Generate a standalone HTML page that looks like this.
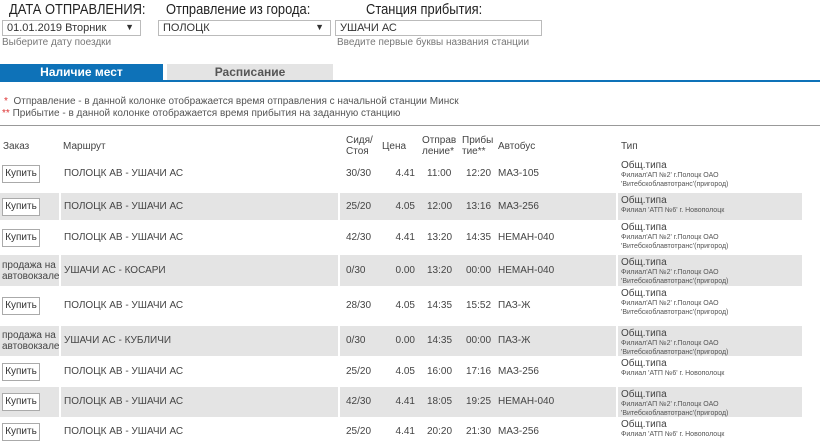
<!DOCTYPE html>
<html><head><meta charset="utf-8">
<style>
*{margin:0;padding:0;box-sizing:border-box}
body{width:820px;height:446px;overflow:hidden;background:#fff;font-family:"Liberation Sans",Arial,sans-serif;color:#333;position:relative;font-size:10px}
.a{position:absolute;white-space:nowrap}
.h{font-size:15px;color:#222;top:1px;transform:scaleX(0.86);transform-origin:0 0}
.sel{position:absolute;top:20px;height:16px;border:1px solid #bbb;font-size:11px;padding:1px 4px;color:#333;background:#fff}
.sel span{position:absolute;right:6px;top:1px;font-size:9px}
.hint{font-size:10px;color:#777;top:37px}
.tab{position:absolute;top:64px;height:17px;font-weight:bold;font-size:12px;text-align:center;line-height:17px}
.row{position:absolute;left:0;width:802px}
.g{background:#e4e4e4}
.c{position:absolute;font-size:10px;color:#444;white-space:nowrap}
.btn{position:absolute;left:2px;width:38px;height:18px;border:1px solid #aaa;background:#fff;font-size:10px;text-align:center;line-height:16px;color:#333}
.vl{position:absolute;top:0;bottom:0;width:2px;background:#fff}
.t1{font-size:10px;color:#444}
.t2{font-size:7px;color:#555;line-height:9px}
</style></head><body>
<div class="a h" style="left:9px">ДАТА ОТПРАВЛЕНИЯ:</div>
<div class="a h" style="left:166px">Отправление из города:</div>
<div class="a h" style="left:366px">Станция прибытия:</div>
<div class="sel" style="left:2px;width:139px">01.01.2019 Вторник<span>▼</span></div>
<div class="sel" style="left:158px;width:173px">ПОЛОЦК<span>▼</span></div>
<div class="sel" style="left:335px;width:207px">УШАЧИ АС</div>
<div class="a hint" style="left:2px">Выберите дату поездки</div>
<div class="a hint" style="left:337px">Введите первые буквы названия станции</div>
<div class="tab" style="left:0;width:163px;background:#0e72b8;color:#fff">Наличие мест</div>
<div class="tab" style="left:167px;width:166px;background:#e4e4e4;color:#555;height:16px">Расписание</div>
<div class="a" style="left:0;top:80px;width:820px;height:2px;background:#0e72b8"></div>
<div class="a" style="left:4px;top:96px;font-size:10px;color:#555"><span style="color:#d33">*</span>&nbsp;&nbsp;Отправление - в данной колонке отображается время отправления с начальной станции Минск</div>
<div class="a" style="left:2px;top:108px;font-size:10px;color:#555"><span style="color:#d33">**</span> Прибытие - в данной колонке отображается время прибытия на заданную станцию</div>
<div class="a" style="left:0;top:125px;width:820px;height:1px;background:#999"></div>
<div class="c" style="left:3px;top:141px">Заказ</div>
<div class="c" style="left:63px;top:141px">Маршрут</div>
<div class="c" style="left:346px;top:135px;line-height:11px">Сидя/<br>Стоя</div>
<div class="c" style="left:382px;top:141px">Цена</div>
<div class="c" style="left:422px;top:135px;line-height:11px">Отправ<br>ление*</div>
<div class="c" style="left:462px;top:135px;line-height:11px">Прибы<br>тие**</div>
<div class="c" style="left:498px;top:141px">Автобус</div>
<div class="c" style="left:621px;top:141px">Тип</div>

<div id="rows"></div>
<script>
var R=[
[158,32,0,'b','ПОЛОЦК АВ - УШАЧИ АС','30/30','4.41','11:00','12:20','МАЗ-105',1],
[193,27,1,'b','ПОЛОЦК АВ - УШАЧИ АС','25/20','4.05','12:00','13:16','МАЗ-256',0],
[220,35,0,'b','ПОЛОЦК АВ - УШАЧИ АС','42/30','4.41','13:20','14:35','НЕМАН-040',1],
[255,31,1,'p','УШАЧИ АС - КОСАРИ','0/30','0.00','13:20','00:00','НЕМАН-040',1],
[286,40,0,'b','ПОЛОЦК АВ - УШАЧИ АС','28/30','4.05','14:35','15:52','ПАЗ-Ж',1],
[326,30,1,'p','УШАЧИ АС - КУБЛИЧИ','0/30','0.00','14:35','00:00','ПАЗ-Ж',1],
[356,31,0,'b','ПОЛОЦК АВ - УШАЧИ АС','25/20','4.05','16:00','17:16','МАЗ-256',0],
[387,30,1,'b','ПОЛОЦК АВ - УШАЧИ АС','42/30','4.41','18:05','19:25','НЕМАН-040',1],
[417,30,0,'b','ПОЛОЦК АВ - УШАЧИ АС','25/20','4.41','20:20','21:30','МАЗ-256',0]];
var h='';
R.forEach(function(r){
 var t=r[0],H=r[1],m=Math.round(H/2)-6;
 h+='<div class="row'+(r[2]?' g':'')+'" style="top:'+t+'px;height:'+H+'px">';
 if(r[2])[59,338,616].forEach(function(x){h+='<div class="vl" style="left:'+x+'px"></div>'});
 if(r[3]=='b')h+='<div class="btn" style="top:'+(m-3)+'px">Купить</div>';
 else h+='<div class="c" style="left:2px;top:'+(m-5)+'px;line-height:11px">продажа на<br>автовокзале</div>';
 h+='<div class="c" style="left:64px;top:'+m+'px">'+r[4]+'</div>';
 h+='<div class="c" style="left:346px;top:'+m+'px">'+r[5]+'</div>';
 h+='<div class="c" style="left:395px;width:20px;text-align:right;top:'+m+'px">'+r[6]+'</div>';
 h+='<div class="c" style="left:427px;top:'+m+'px">'+r[7]+'</div>';
 h+='<div class="c" style="left:466px;top:'+m+'px">'+r[8]+'</div>';
 h+='<div class="c" style="left:498px;top:'+m+'px">'+r[9]+'</div>';
 h+='<div class="c" style="left:621px;top:2px"><div class="t1">Общ.типа</div><div class="t2">'+(r[10]?"Филиал'АП №2' г.Полоцк ОАО<br>'Витебскоблавтотранс'(пригород)":"Филиал 'АТП №6' г. Новополоцк")+'</div></div>';
 h+='</div>';
});
document.getElementById('rows').innerHTML=h;
</script>
</body></html>
